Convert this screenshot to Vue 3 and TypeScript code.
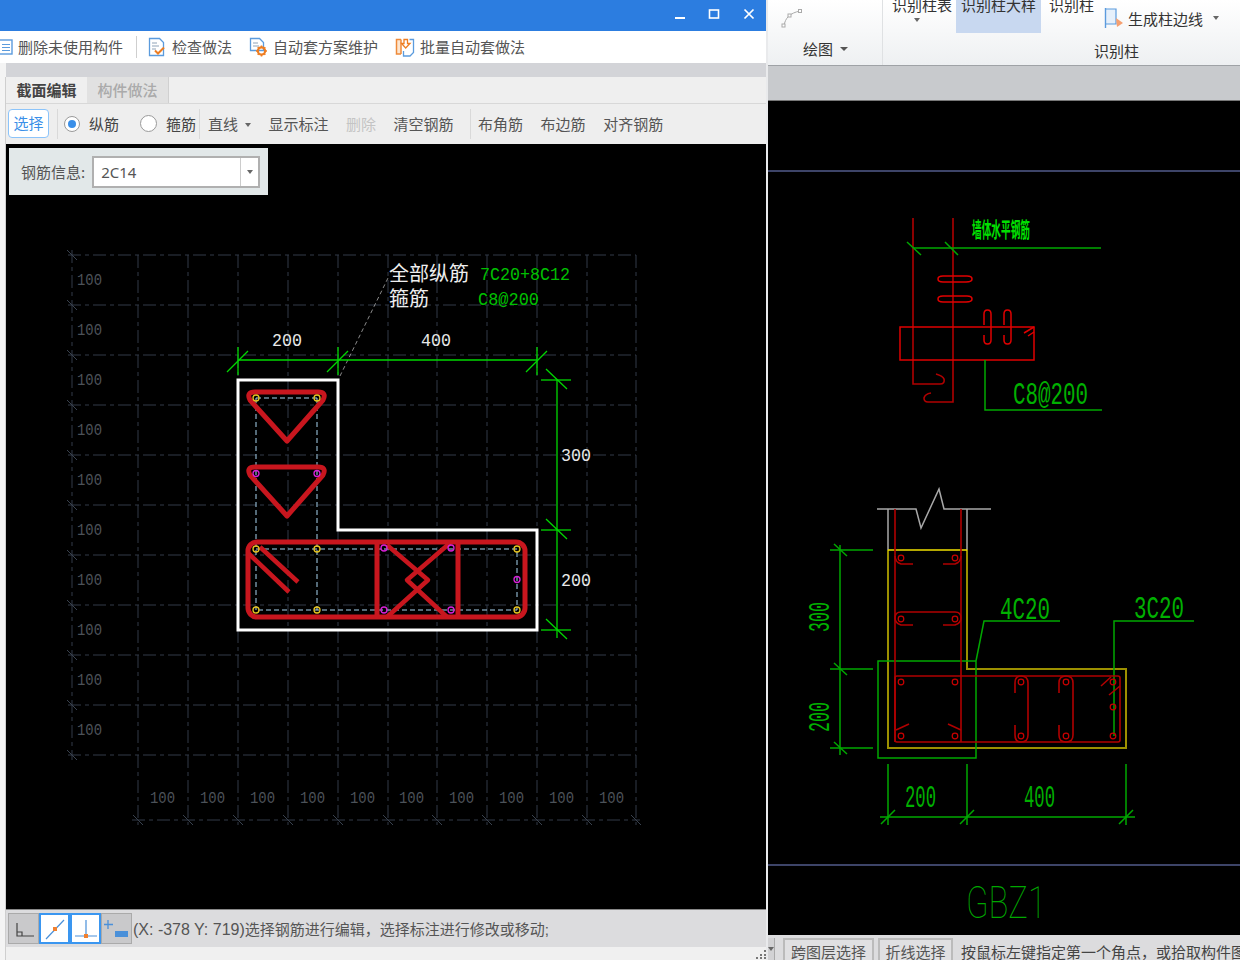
<script setup lang="ts">
const gridX: number[] = [138, 188, 238, 288, 338, 388, 437, 487, 537, 587, 636]
const gridY: number[] = [255, 305, 355, 405, 455, 505, 555, 605, 655, 705, 755]
const sideLabels: number[] = [285, 335, 385, 435, 485, 535, 585, 635, 685, 735]
const bottomLabels: number[] = [150, 200, 250, 300, 350, 399, 449, 499, 549, 599]
const yellowDots: number[][] = [[256, 398], [317, 398], [256, 549], [317, 549], [517, 549], [256, 610], [317, 610], [517, 610]]
const pinkDots: number[][] = [[256, 473.5], [317, 473.5], [384, 548], [451, 548], [384, 610], [451, 610], [517, 579.5]]
const rebarDots: number[][] = [[901, 558], [955, 558], [901, 619], [955, 619], [901, 682], [955, 682], [901, 736], [955, 736], [1021, 682], [1066, 682], [1113, 682], [1113, 707], [1021, 736], [1066, 736], [1113, 736]]
const hSlash: number[] = [238, 338, 537]
const vSlash: number[] = [380, 530, 630]
</script>

<template>
  <div class="app">
    <section class="left">
      <header class="titlebar">
        <svg class="win-ctl" width="90" height="31" viewBox="0 0 90 31">
          <path d="M6 18h10" stroke="#fff" stroke-width="2" />
          <rect x="40.5" y="10" width="9" height="8" fill="none" stroke="#fff" stroke-width="1.6" />
          <path d="M75.5 9.5l9 9m0-9l-9 9" stroke="#fff" stroke-width="1.7" />
        </svg>
      </header>

      <div class="toolbar">
        <div class="tb-item first">
          <svg width="19" height="18" viewBox="0 0 19 18"><rect x="1" y="2" width="17" height="14" fill="#fff" stroke="#5b9bdd" stroke-width="1.4" /><path d="M8 6.5h8M8 9.5h8M8 12.5h8" stroke="#5b9bdd" stroke-width="1.2" /></svg>
          <span>删除未使用构件</span>
        </div>
        <i class="tb-sep"></i>
        <div class="tb-item">
          <svg width="18" height="20" viewBox="0 0 18 20"><path d="M1.5 1.5h10l4 4v13h-14z" fill="#fff" stroke="#5b9bdd" stroke-width="1.3" /><path d="M4 6h5M4 9h7M4 12h4" stroke="#8fa3b8" stroke-width="1" /><path d="M7 13.5l3 3 6-6" fill="none" stroke="#ee7d22" stroke-width="2" /></svg>
          <span>检查做法</span>
        </div>
        <div class="tb-item">
          <svg width="18" height="20" viewBox="0 0 18 20"><path d="M1.5 1.5h9l4 4v8h-13z" fill="#fff" stroke="#5b9bdd" stroke-width="1.3" /><path d="M4 6h5M4 9h6" stroke="#8fa3b8" stroke-width="1" /><circle cx="12.5" cy="14" r="3.6" fill="none" stroke="#ee7d22" stroke-width="2.2" /><path d="M12.5 8.5v2M12.5 17.500v2M7 14h2M16 14h2M8.700 10.200l1.400 1.400M14.900 16.400l1.400 1.400M16.300 10.200l-1.400 1.400M10.100 16.400l-1.400 1.400" stroke="#ee7d22" stroke-width="1.6" /></svg>
          <span>自动套方案维护</span>
        </div>
        <div class="tb-item batch">
          <svg width="20" height="20" viewBox="0 0 20 20"><path d="M14.500 2.500h4v13l-3.500 3.500H8.500v-5" fill="#fff" stroke="#5b9bdd" stroke-width="1.300" /><path d="M6 2.500H1.500v14.500H6" fill="#fde6d0" stroke="#ee8a3a" stroke-width="1.500" /><path d="M6 2.500v14.500" stroke="#ee8a3a" stroke-width="1.500" /><path d="M9 2.500h3.500v4h2.500l-4.300 4.500-4.200-4.500H9z" fill="#fff" stroke="#ee7d22" stroke-width="1.300" /></svg>
          <span>批量自动套做法</span>
        </div>
      </div>

      <div class="gray-band"></div>

      <div class="inner">
        <nav class="tabs">
          <span class="tab active">截面编辑</span>
          <span class="tab">构件做法</span>
        </nav>

        <div class="tools">
          <button class="select-btn" type="button">选择</button>
          <i class="tool-sep sep-a"></i>
          <span class="radio on"></span>
          <span class="radio-label">纵筋</span>
          <span class="radio second"></span>
          <span class="radio-label">箍筋</span>
          <i class="tool-sep sep-b"></i>
          <span class="tool line-tool">直线<b class="caret"></b></span>
          <span class="tool">显示标注</span>
          <span class="tool off">删除</span>
          <span class="tool">清空钢筋</span>
          <i class="tool-sep sep-c"></i>
          <span class="tool">布角筋</span>
          <span class="tool">布边筋</span>
          <span class="tool">对齐钢筋</span>
        </div>

        <div class="canvas">
          <div class="info">
            <span class="info-label">钢筋信息:</span>
            <div class="combo">
              <span class="combo-value">2C14</span>
              <span class="combo-drop"><b class="caret"></b></span>
            </div>
          </div>

          <svg class="draw" width="760" height="765" viewBox="6 144 760 765">
            <g class="grid">
              <line v-for="x in gridX" :key="'v' + x" :x1="x" y1="255" :x2="x" y2="825" />
              <line v-for="y in gridY" :key="'h' + y" x1="68" :y1="y" x2="636" :y2="y" />
              <line x1="72" y1="250" x2="72" y2="760" />
              <line x1="132" y1="820" x2="640" y2="820" />
            </g>
            <g class="grid-ticks">
              <line v-for="y in gridY" :key="'ty' + y" :x1="67" :y1="y - 5" :x2="77" :y2="y + 5" />
              <line v-for="x in gridX" :key="'tx' + x" :x1="x - 5" y1="815" :x2="x + 5" y2="825" />
            </g>
            <text v-for="y in sideLabels" :key="'sl' + y" class="grid-label" x="77" :y="y" textLength="25" lengthAdjust="spacingAndGlyphs">100</text>
            <text v-for="x in bottomLabels" :key="'bl' + x" class="grid-label" :x="x" y="803" textLength="25" lengthAdjust="spacingAndGlyphs">100</text>

            <line class="leader" x1="340" y1="376" x2="388" y2="278" />

            <g class="dim">
              <path d="M238 360H537M557 380V638" />
              <line v-for="x in hSlash" :key="'hs' + x" :x1="x" y1="347" :x2="x" y2="375" />
              <line v-for="x in hSlash" :key="'hd' + x" :x1="x - 11" y1="372" :x2="x + 10" y2="351" />
              <line v-for="y in vSlash" :key="'vs' + y" x1="541" :y1="y" x2="571" :y2="y" />
              <line v-for="y in vSlash" :key="'vd' + y" x1="546" :y1="y - 11" x2="567" :y2="y + 9" />
            </g>

            <text class="cjk-note" x="389" y="281">全部纵筋</text>
            <text class="cjk-note" x="389" y="306">箍筋</text>
            <text class="note-green" x="480" y="280" textLength="90" lengthAdjust="spacingAndGlyphs">7C20+8C12</text>
            <text class="note-green" x="478" y="305" textLength="61" lengthAdjust="spacingAndGlyphs">C8@200</text>
            <text class="dim-text" x="272" y="346" textLength="30" lengthAdjust="spacingAndGlyphs">200</text>
            <text class="dim-text" x="421" y="346" textLength="30" lengthAdjust="spacingAndGlyphs">400</text>
            <text class="dim-text" x="561" y="461" textLength="30" lengthAdjust="spacingAndGlyphs">300</text>
            <text class="dim-text" x="561" y="586" textLength="30" lengthAdjust="spacingAndGlyphs">200</text>

            <path class="outline" d="M238 380H338V530H537V630H238Z" />

            <g class="dashed">
              <path d="M256 398H317M256 398V610M317 398V610M256 549H517V610H256" />
            </g>

            <g class="bars">
              <rect x="248" y="542" width="277" height="75" rx="9" />
              <path d="M377 544V616M458 544V616" />
              <g class="bars-thin">
                <path d="M387 545L428 580L387 617" />
                <path d="M450 543L407 580L447 617" />
                <path d="M260 547L298 582M248 553L289 592" />
              </g>
              <path d="M287 441L250 400Q246 392 255 392H318Q327 392 323 400Z" />
              <path d="M287 516L250 475Q246 467 255 467H318Q327 467 323 475Z" />
            </g>

            <circle v-for="d in yellowDots" :key="'y' + d[0] + d[1]" class="dot-y" :cx="d[0]" :cy="d[1]" r="3" />
            <circle v-for="d in pinkDots" :key="'p' + d[0] + d[1]" class="dot-p" :cx="d[0]" :cy="d[1]" r="3" />
          </svg>
        </div>

        <footer class="status">
          <span class="s-btn">
            <svg width="28" height="28" viewBox="0 0 28 28"><path d="M7 8v13h17M7 17h5v4" fill="none" stroke="#444" stroke-width="1.200" /></svg>
          </span>
          <span class="s-btn on">
            <svg width="26" height="26" viewBox="0 0 26 26"><path d="M4 23L22 4" stroke="#4a90d9" stroke-width="1.200" /><rect x="11" y="11" width="4" height="4" fill="#f08030" /></svg>
          </span>
          <span class="s-btn on">
            <svg width="26" height="26" viewBox="0 0 26 26"><path d="M13 4V20M2 20H24" stroke="#4a90d9" stroke-width="1.200" /><rect x="11" y="18" width="4" height="4" fill="#f08030" /></svg>
          </span>
          <span class="s-btn">
            <svg width="28" height="28" viewBox="0 0 28 28"><path d="M5 5v9M1 9.500h9" stroke="#4a90d9" stroke-width="1.300" /><rect x="12" y="16" width="13" height="6" fill="#4a90d9" /></svg>
          </span>
          <span class="status-text"><span class="coord">(X: -378 Y: 719)</span>选择钢筋进行编辑，选择标注进行修改或移动;</span>
        </footer>
        <div class="foot">
          <svg class="grip" width="14" height="12" viewBox="0 0 14 12"><path d="M11 2h2v2h-2zM7 6h2v2H7zM11 6h2v2h-2zM3 9h2v2H3zM7 9h2v2H7zM11 9h2v2h-2z" fill="#777" /></svg>
        </div>
      </div>
    </section>

    <section class="right">
      <div class="ribbon">
        <div class="rb-draw">
          <svg class="curve" width="24" height="22" viewBox="0 0 24 22"><path d="M4 19C5 11 10 6 20 4" fill="none" stroke="#aaa" stroke-width="1" /><rect x="2" y="17" width="3" height="3" fill="#fff" stroke="#aaa" /><rect x="8" y="7" width="3" height="3" fill="#fff" stroke="#aaa" /><rect x="18.500" y="2.500" width="3" height="3" fill="#fff" stroke="#aaa" /></svg>
          <div class="rb-caption">绘图<b class="caret dark"></b></div>
        </div>
        <div class="rb-recog">
          <div class="rb-row">
            <div class="rb-cmd first-cmd">识别柱表<b class="caret under"></b></div>
            <div class="rb-cmd active-cmd">识别柱大样</div>
            <div class="rb-cmd">识别柱</div>
            <div class="rb-side">
              <svg width="20" height="22" viewBox="0 0 20 22"><path d="M2 2h10v15H2" fill="#e6f0fb" stroke="#5b9bdd" stroke-width="1.200" /><path d="M1.500 1v20" stroke="#5b9bdd" stroke-width="1.400" /><path d="M12 11l7 5-6 4z" fill="#f6a070" /></svg>
              <span>生成柱边线</span>
              <b class="caret"></b>
            </div>
          </div>
          <div class="rb-title">识别柱</div>
        </div>
      </div>
      <div class="right-band"></div>
      <div class="right-canvas">
        <svg class="draw" width="472" height="834" viewBox="768 101 472 834">
          <path class="sheet" d="M768 171H1240M768 865H1240" />

          <g class="dark-red">
            <path d="M913 218V384H940Q945 384 944 379Q943 376 936 374" />
            <path d="M953 218V402H928Q924 402 924 398Q925 394 931 393" />
          </g>
          <g class="thin-green">
            <path d="M913 248H1101" />
            <path d="M907 242L921 255M945 242L958 255" />
          </g>
          <text class="wall-note" x="972" y="237" textLength="58" lengthAdjust="spacingAndGlyphs">墙体水平钢筋</text>
          <g class="bright-red">
            <rect x="900" y="327" width="134" height="33" />
            <path d="M1024 333L1034 327M1028 336L1034 332" />
            <path d="M953 276H943Q938 276 938 279Q938 282 943 282H966Q972 282 972 279Q972 276 967 276H953" />
            <path d="M953 296H943Q938 296 938 299Q938 302 943 302H966Q972 302 972 299Q972 296 967 296H953" />
            <path d="M984 325V314Q984 310 987.500 310Q991 310 991 314V340Q991 344 987.500 344Q984 344 984 340V335" />
            <path d="M1004 325V314Q1004 310 1007.500 310Q1011 310 1011 314V340Q1011 344 1007.500 344Q1004 344 1004 340V335" />
          </g>
          <path class="thin-green" d="M985 360V410H1102" />
          <text class="cad-green big" x="1013" y="404" textLength="75" lengthAdjust="spacingAndGlyphs">C8@200</text>

          <path class="light-gray" d="M877 509H916L921 528L939 489L944 509H991M888 509V550M967 509V550" />
          <path class="olive" d="M888 550V748H1126V669H967V550" />
          <path class="bright-yellow" d="M888 550H967" />
          <path class="thin-green" d="M976 661H878V758H976ZM976 661L984 621H1060M1114 736V621H1194" />
          <g class="dark-red">
            <path d="M895 509V742M961 509V742" />
            <rect x="895" y="676" width="225" height="66" rx="2" />
            <path d="M913 564H901Q895 562 895 556M943 564H955Q961 562 961 556" />
            <path d="M913 625H901Q895 623 895 618Q895 612 901 612H955Q961 612 961 618Q961 623 955 625H943" />
            <path d="M1015 693V683Q1015 676 1021 676Q1028 676 1028 683V735Q1028 742 1021 742Q1015 742 1015 735V725" />
            <path d="M1059 693V683Q1059 676 1066 676Q1073 676 1073 683V735Q1073 742 1066 742Q1059 742 1059 735V725" />
            <path d="M1101 686L1111 677M1109 695L1120 686M896 730L909 724M961 730L948 724" />
          </g>
          <circle v-for="d in rebarDots" :key="'r' + d[0] + d[1]" class="rebar-dot" :cx="d[0]" :cy="d[1]" r="2.800" />

          <g class="thin-green">
            <path d="M840 545V755M830 550H873M830 669H873M830 748H873" />
            <path d="M834 544L847 556M834 663L847 675M834 742L847 754" />
            <path d="M880 817H1135M888 764V825M967 764V825M1126 764V825" />
            <path d="M881 824L895 810M960 824L974 810M1119 824L1133 810" />
          </g>

          <text class="cad-green rot" x="820" y="626" text-anchor="middle" textLength="30" lengthAdjust="spacingAndGlyphs" transform="rotate(-90 820 617)">300</text>
          <text class="cad-green rot" x="820" y="726" text-anchor="middle" textLength="30" lengthAdjust="spacingAndGlyphs" transform="rotate(-90 820 717)">200</text>
          <text class="cad-green big" x="905" y="807" textLength="31" lengthAdjust="spacingAndGlyphs">200</text>
          <text class="cad-green big" x="1024" y="807" textLength="31" lengthAdjust="spacingAndGlyphs">400</text>
          <text class="cad-green big" x="1000" y="619" textLength="50" lengthAdjust="spacingAndGlyphs">4C20</text>
          <text class="cad-green big" x="1134" y="618" textLength="50" lengthAdjust="spacingAndGlyphs">3C20</text>
          <text class="cad-green title" x="966" y="918" textLength="80" lengthAdjust="spacingAndGlyphs">GBZ1</text>
        </svg>
      </div>
      <footer class="right-status">
        <span class="rs-caret"><b class="caret"></b></span>
        <span class="rs-btn wide">跨图层选择</span>
        <span class="rs-btn">折线选择</span>
        <span class="rs-text">按鼠标左键指定第一个角点，或拾取构件图元</span>
      </footer>
    </section>
  </div>
</template>

<style scoped>
.app {
  display: flex;
  width: 1240px;
  height: 960px;
  overflow: hidden;
  background: #efefef;
  font-family: "Noto Sans CJK SC", "Liberation Sans", sans-serif;
  font-size: 15px;
  color: #555;
}
.left {
  width: 768px;
  flex: none;
  display: flex;
  flex-direction: column;
  border-right: 2px solid #e9eaec;
  box-sizing: border-box;
  background: #f4f4f4;
}
.titlebar {
  height: 31px;
  flex: none;
  background: #2c7de0;
  display: flex;
  justify-content: flex-end;
}
.win-ctl {
  margin-right: 7px;
}
.toolbar {
  height: 32px;
  flex: none;
  background: #fff;
  display: flex;
  align-items: center;
  overflow: hidden;
  padding-bottom: 1px;
  box-sizing: border-box;
}
.tb-item {
  display: flex;
  align-items: center;
  gap: 6px;
  margin-left: 17px;
  white-space: nowrap;
}
.tb-item.first {
  margin-left: -6px;
  gap: 5px;
}
.tb-sep {
  width: 1px;
  height: 22px;
  background: #cfcfcf;
  margin: 0 -6px 0 13px;
}
.tb-item.batch {
  gap: 5px;
  margin-left: 17px;
}
.gray-band {
  height: 14px;
  flex: none;
  background: #d3d4d8;
  margin-left: 6px;
}
.inner {
  flex: 1;
  min-height: 0;
  display: flex;
  flex-direction: column;
  border-left: 1px solid #cfcfcf;
  margin-left: 5px;
}
.tabs {
  height: 26px;
  flex: none;
  display: flex;
  background: #efefef;
  border-bottom: 1px solid #d8d8d8;
}
.tab {
  width: 81px;
  text-align: center;
  line-height: 25px;
  font-size: 15px;
  color: #aaa;
  background: #e1e1e1;
  border-right: 1px solid #d0d0d0;
  font-weight: 500;
}
.tab.active {
  background: #efefef;
  color: #444;
  font-weight: 700;
  border-right: none;
}
.tools {
  height: 40px;
  flex: none;
  background: #eeeeee;
  display: flex;
  align-items: center;
  padding-left: 2px;
  white-space: nowrap;
  padding-bottom: 1px;
  box-sizing: border-box;
}
.select-btn {
  width: 41px;
  height: 29px;
  padding: 0 0 2px;
  background: #fff;
  border: 1px solid #8cc4fa;
  border-radius: 4px;
  color: #3a8fe8;
  font: inherit;
}
.tool-sep {
  width: 1px;
  height: 30px;
  background: #d9d9d9;
}
.sep-a {
  margin: 0 6px 0 8px;
}
.sep-b {
  margin: 0 8px 0 3px;
}
.sep-c {
  margin: 0 -10px 0 16px;
}
.radio {
  width: 16px;
  height: 16px;
  border: 1px solid #9a9a9a;
  border-radius: 50%;
  background: #fff;
  box-sizing: border-box;
  position: relative;
  flex: none;
}
.radio.on::after {
  content: "";
  position: absolute;
  inset: 3px;
  border-radius: 50%;
  background: #3a8fe8;
}
.radio.second {
  margin-left: 21px;
  width: 17px;
  height: 17px;
}
.radio-label {
  margin-left: 9px;
  color: #444;
}
.tool {
  margin-left: 17.500px;
}
.tool.line-tool {
  margin-left: 0;
  display: inline-flex;
  align-items: center;
}
.tool.line-tool .caret {
  margin: 2px 0 0 7px;
}
.tool.off {
  color: #c4c4c4;
}
.caret {
  display: inline-block;
  width: 0;
  height: 0;
  border-left: 3.500px solid transparent;
  border-right: 3.500px solid transparent;
  border-top: 4px solid #666;
}
.canvas {
  flex: 1;
  min-height: 0;
  background: #000;
  position: relative;
  overflow: hidden;
}
.draw {
  display: block;
}
.info {
  position: absolute;
  left: 3px;
  top: 4px;
  width: 259px;
  height: 47px;
  background: #e2e8e9;
  display: flex;
  align-items: center;
  box-sizing: border-box;
  padding-left: 12px;
  gap: 7px;
  z-index: 1;
}
.info-label {
  white-space: nowrap;
  color: #555;
}
.combo {
  width: 168px;
  height: 32px;
  border: 2px solid #b0b0b0;
  background: #fff;
  box-sizing: border-box;
  display: flex;
  align-items: center;
}
.combo-value {
  flex: 1;
  padding-left: 7px;
  color: #555;
  font-family: "Noto Sans", sans-serif;
  font-size: 15px;
}
.combo-drop {
  width: 17px;
  height: 100%;
  border-left: 1px solid #ccc;
  display: flex;
  align-items: center;
  justify-content: center;
}
.grid line {
  stroke: #333b48;
  stroke-width: 1;
  stroke-dasharray: 13 4 4 4;
}
.grid-ticks line {
  stroke: #3a4350;
  stroke-width: 1;
}
.grid-label {
  fill: #4c5259;
  font-family: "Liberation Mono", monospace;
  font-size: 16px;
}
.leader {
  stroke: #8a8a8a;
  stroke-width: 1;
  stroke-dasharray: 4 3;
}
.dim path,
.dim line {
  stroke: #00d800;
  stroke-width: 1.300;
  fill: none;
}
.cjk-note {
  fill: #eee;
  font-size: 20px;
  font-family: "Noto Sans CJK SC", sans-serif;
}
.note-green {
  fill: #00c000;
  font-family: "Liberation Mono", monospace;
  font-size: 18px;
}
.dim-text {
  fill: #e8e8e8;
  font-family: "Liberation Mono", monospace;
  font-size: 19px;
}
.outline {
  fill: none;
  stroke: #fff;
  stroke-width: 3;
}
.dashed path {
  fill: none;
  stroke: #a8d4f0;
  stroke-width: 1;
  stroke-dasharray: 5 3;
}
.bars rect,
.bars path {
  fill: none;
  stroke: #c8161e;
  stroke-width: 5;
  stroke-linejoin: round;
}
.bars .bars-thin path {
  stroke-width: 4.500;
}
.dot-y {
  fill: none;
  stroke: #e6c420;
  stroke-width: 1.300;
}
.dot-p {
  fill: none;
  stroke: #d820d8;
  stroke-width: 1.300;
}
.status {
  height: 38px;
  flex: none;
  background: #dcdcde;
  border-top: 1px solid #888;
  box-sizing: border-box;
  display: flex;
  align-items: center;
  padding-left: 2px;
}
.s-btn {
  width: 31px;
  height: 31px;
  flex: none;
  background: #c9c9cb;
  border: 1px solid #aaa;
  box-sizing: border-box;
  display: flex;
  align-items: center;
  justify-content: center;
}
.s-btn.on {
  background: #fff;
  border: 2px solid #3a96f0;
}
.status-text {
  font-family: "Liberation Sans", "Noto Sans CJK SC", sans-serif;
  font-size: 15px;
  color: #555;
  margin-left: 1px;
  white-space: nowrap;
}
.coord {
  font-size: 16px;
}
.foot {
  height: 13px;
  flex: none;
  background: #f0f0f0;
  display: flex;
  justify-content: flex-end;
  align-items: flex-end;
}
.grip {
  margin: 0 -1px 0 0;
}
.right {
  flex: 1;
  min-width: 0;
  display: flex;
  flex-direction: column;
  background: #000;
}
.ribbon {
  height: 66px;
  flex: none;
  display: flex;
  background: linear-gradient(#ffffff, #eef0f2);
  border-bottom: 1px solid #9fa2a6;
  box-sizing: border-box;
  color: #333;
  font-size: 14px;
  overflow: hidden;
}
.rb-draw {
  width: 115px;
  flex: none;
  border-right: 1px solid #dfe1e3;
  box-sizing: border-box;
  display: flex;
  flex-direction: column;
}
.curve {
  margin: 7px 0 0 12px;
}
.rb-caption {
  margin: 10px 0 0 35px;
  display: flex;
  align-items: center;
  font-size: 15px;
  line-height: 20px;
}
.caret.dark {
  margin-left: 7px;
  border-top-color: #555;
  border-left-width: 4px;
  border-right-width: 4px;
}
.rb-recog {
  flex: 1;
  min-width: 0;
  display: flex;
  flex-direction: column;
}
.rb-row {
  height: 33px;
  flex: none;
  display: flex;
}
.rb-cmd {
  height: 33px;
  line-height: 10px;
  white-space: nowrap;
  font-size: 15px;
  position: relative;
  padding: 0 5px;
}
.first-cmd {
  margin-left: 4px;
}
.active-cmd {
  background: #c8d8f0;
  margin-left: -1px;
}
.rb-cmd:nth-child(3) {
  margin-left: 3px;
}
.caret.under {
  position: absolute;
  left: 27px;
  top: 18px;
}
.rb-side {
  display: flex;
  align-items: center;
  gap: 4px;
  margin-left: 5px;
  font-size: 15px;
  padding-top: 3px;
}
.rb-side .caret {
  margin-left: 6px;
}
.rb-title {
  padding-left: 110px;
  text-align: center;
  font-size: 15px;
  line-height: 20px;
  margin-top: 8px;
}
.right-band {
  height: 35px;
  flex: none;
  background: #c8cacd;
  border-bottom: 1px solid #777;
  box-sizing: border-box;
}
.right-canvas {
  flex: 1;
  min-height: 0;
  background: #000;
}
.sheet {
  stroke: #3d4468;
  stroke-width: 2;
  fill: none;
}
.dark-red path,
.dark-red rect {
  fill: none;
  stroke: #b00000;
  stroke-width: 1.600;
}
.bright-red path,
.bright-red rect {
  fill: none;
  stroke: #e00000;
  stroke-width: 1.500;
}
.thin-green,
.thin-green path {
  fill: none;
  stroke: #00a800;
  stroke-width: 1.500;
}
.wall-note {
  fill: #00e000;
  font-family: "Noto Sans CJK SC", sans-serif;
  font-size: 21px;
  font-weight: 700;
}
.cad-green {
  fill: #00b000;
  font-family: "Liberation Mono", monospace;
}
.cad-green.big {
  font-size: 31px;
}
.cad-green.rot {
  font-size: 29px;
}
.cad-green.title {
  font-family: Roboto, "Liberation Mono", monospace;
  font-weight: 100;
  font-size: 44px;
  fill: #00a800;
}
.light-gray {
  fill: none;
  stroke: #a8a8a8;
  stroke-width: 1.500;
}
.olive {
  fill: none;
  stroke: #9c9000;
  stroke-width: 2;
}
.bright-yellow {
  fill: none;
  stroke: #f0e000;
  stroke-width: 1.500;
}
.rebar-dot {
  fill: none;
  stroke: #c80000;
  stroke-width: 1.200;
}
.right-status {
  height: 25px;
  flex: none;
  background: #dcdcde;
  display: flex;
  align-items: flex-start;
  padding-top: 3px;
  box-sizing: border-box;
  overflow: hidden;
  white-space: nowrap;
  color: #555;
}
.rs-caret {
  width: 9px;
  height: 30px;
  margin-right: 8px;
  background: #d2d2d4;
  border-right: 1px solid #aaa;
  display: flex;
  justify-content: center;
  padding-top: 9px;
  box-sizing: border-box;
}
.rs-btn {
  height: 30px;
  width: 75px;
  flex: none;
  background: #e0e0e2;
  border: 2px solid #bbb;
  box-sizing: border-box;
  text-align: center;
  line-height: 24px;
  margin-right: 4px;
}
.rs-btn.wide {
  width: 91px;
}
.rs-text {
  margin-left: 4px;
  line-height: 28px;
  color: #444;
}
</style>
